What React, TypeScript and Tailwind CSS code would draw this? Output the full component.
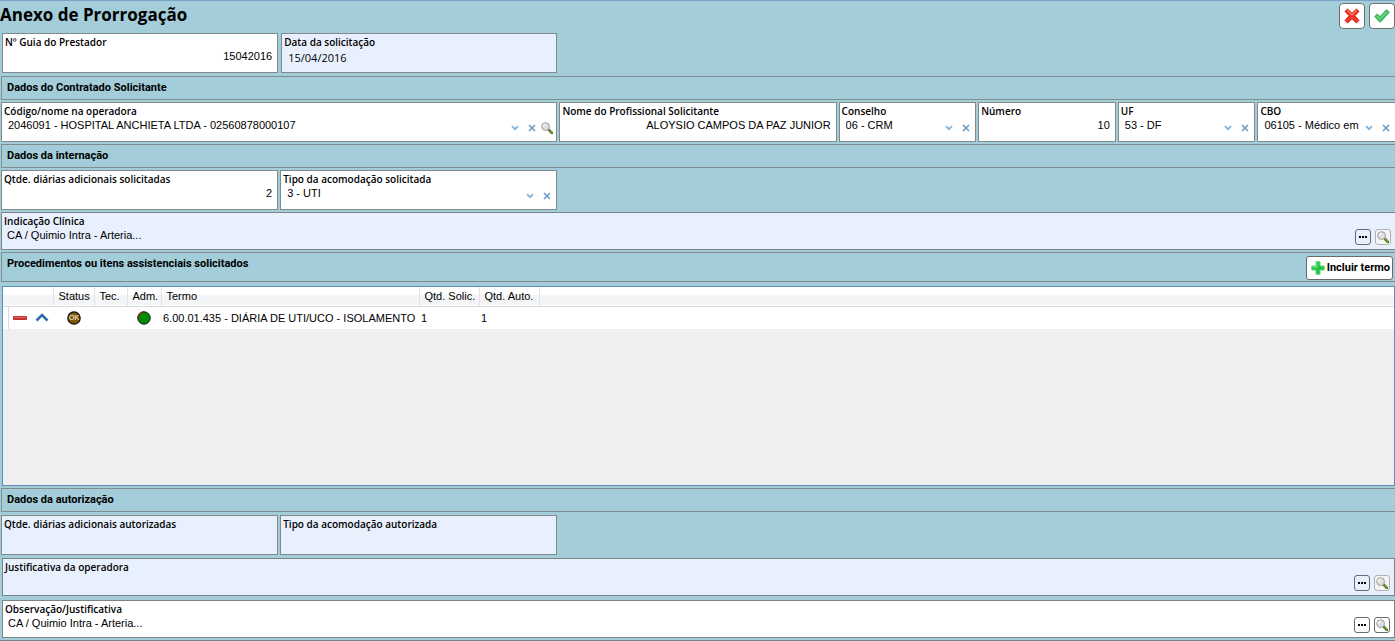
import { useState } from "react";
import type { ReactNode } from "react";
import clsx from "clsx";

const labelClass =
  "block whitespace-nowrap font-['Open_Sans','Noto_Sans',sans-serif] text-[10px] leading-3 font-semibold";
const inputClass = "h-4 w-full min-w-0 bg-transparent p-0 outline-none";

function MagnifierIcon({ size = 12 }: { size?: number }) {
  return (
    <svg width={size} height={size} viewBox="0 0 12 12" fill="none" aria-hidden="true">
      <path d="M8 8 L11 11" stroke="#4c7a22" strokeWidth="2.6" strokeLinecap="round" />
      <path d="M8.6 8.2 L11 10.6" stroke="#93b85a" strokeWidth="1" strokeLinecap="round" />
      <circle cx="4.6" cy="4.6" r="3.9" fill="#dedede" stroke="#9c9c9c" strokeWidth="1" />
      <path d="M2.4 4.6 A2.2 2.2 0 0 1 4.6 2.4" stroke="#ffffff" strokeWidth="1.2" />
    </svg>
  );
}

function ChevronIcon() {
  return (
    <svg width="8" height="6" viewBox="0 0 8 6" fill="none" aria-hidden="true">
      <path d="M1 1.2 L4 4.2 L7 1.2" stroke="#86b2d8" strokeWidth="1.8" />
    </svg>
  );
}

function ClearIcon() {
  return (
    <svg width="8" height="8" viewBox="0 0 8 8" fill="none" aria-hidden="true">
      <path d="M1 1 L7 7 M7 1 L1 7" stroke="#6f9cc6" strokeWidth="1.7" />
    </svg>
  );
}

function CancelIcon() {
  return (
    <svg width="16" height="16" viewBox="0 0 16 16" aria-hidden="true">
      <path
        d="M3.6 1 L8 5.2 L12.4 1 L15 3.4 L10.8 7.8 L15 12.4 L12.4 15 L8 10.8 L3.6 15 L1 12.4 L5.2 7.8 L1 3.4 Z"
        fill="#ee3526"
        stroke="#d81f17"
        strokeWidth="1"
        strokeLinejoin="round"
      />
      <path d="M3.6 2.6 L8 6.8 L12.4 2.6" fill="none" stroke="#ff7b62" strokeWidth="1.4" />
    </svg>
  );
}

function ConfirmIcon() {
  return (
    <svg width="16" height="16" viewBox="0 0 16 16" aria-hidden="true">
      <path
        d="M0.8 8.6 L3.2 6 L6.2 8.6 L12.4 1.8 L15.4 4 L6.8 13.8 L5.4 13.8 Z"
        fill="#49c466"
        stroke="#2fa64d"
        strokeWidth="0.9"
        strokeLinejoin="round"
      />
      <path d="M3 8 L6.1 10.8 L13 3.6" fill="none" stroke="#86e29a" strokeWidth="1" />
    </svg>
  );
}

function PlusIcon() {
  return (
    <svg width="14" height="14" viewBox="0 0 14 14" aria-hidden="true">
      <path
        d="M5 0.8 H9 V5 H13.2 V9 H9 V13.2 H5 V9 H0.8 V5 H5 Z"
        fill="#1fc443"
        stroke="#5fd47a"
        strokeWidth="1"
      />
      <path d="M6 2 V6 H2" fill="none" stroke="#7fe795" strokeWidth="1" />
    </svg>
  );
}

function Section({ title, tall, children }: { title: string; tall?: boolean; children?: ReactNode }) {
  return (
    <div
      className={clsx(
        "ml-px flex justify-between border border-r-0 border-[#7f8c90] pl-[5px]",
        tall ? "h-[30px]" : "h-6"
      )}
    >
      <h2 className="pt-[3px] font-['Roboto','Liberation_Sans',sans-serif] text-[11px] leading-4 font-bold">{title}</h2>
      {children}
    </div>
  );
}

type FieldProps = {
  id: string;
  label: string;
  readOnly?: boolean;
  className?: string;
  children?: ReactNode;
};

function Field({ id, label, readOnly, className, children }: FieldProps) {
  return (
    <div
      className={clsx(
        "h-10 min-w-0 border border-[#808a8c] pt-[2px] pl-[2px]",
        readOnly ? "bg-[#e8f0fd]" : "bg-white",
        className
      )}
    >
      <label htmlFor={id} className={labelClass}>
        {label}
      </label>
      {children}
    </div>
  );
}

function NumberField({ id, label, value, className }: { id: string; label: string; value: string; className?: string }) {
  return (
    <Field id={id} label={label} className={className}>
      <input id={id} type="text" defaultValue={value} className={clsx(inputClass, "pr-[5px] text-right")} />
    </Field>
  );
}

type SelectFieldProps = {
  id: string;
  label: string;
  option: string;
  className?: string;
  searchable?: boolean;
};

function SelectField({ id, label, option, className, searchable }: SelectFieldProps) {
  const [value, setValue] = useState(option);

  return (
    <Field id={id} label={label} className={className}>
      <div className="flex items-start pl-[4px]">
        <select
          id={id}
          value={value}
          onChange={(e) => setValue(e.target.value)}
          className={clsx(inputClass, "flex-1 appearance-none overflow-hidden")}
        >
          <option value=""></option>
          <option value={option}>{option}</option>
        </select>
        <div className={clsx("flex h-[22px] shrink-0 items-center pl-[6px]", searchable ? "pr-[3px]" : "pr-[5px]")}>
          <ChevronIcon />
          <button type="button" aria-label={`Limpar ${label}`} onClick={() => setValue("")} className="ml-[9px]">
            <ClearIcon />
          </button>
          {searchable && (
            <button type="button" aria-label={`Pesquisar ${label}`} className="ml-[5px]">
              <MagnifierIcon />
            </button>
          )}
        </div>
      </div>
    </Field>
  );
}

type TextFieldProps = {
  id: string;
  label: string;
  value?: string;
  readOnly?: boolean;
  className?: string;
};

function TextField({ id, label, value = "", readOnly, className }: TextFieldProps) {
  return (
    <div
      className={clsx(
        "flex h-[38px] items-end justify-between border border-[#7b8486] pt-[2px] pr-[4px] pb-1 pl-[2px]",
        readOnly ? "bg-[#e8f0fd]" : "bg-white",
        className
      )}
    >
      <div className="flex-1 self-start">
        <label htmlFor={id} className={labelClass}>
          {label}
        </label>
        <input id={id} type="text" defaultValue={value} readOnly={readOnly} className={clsx(inputClass, "pl-[3px]")} />
      </div>
      <div className="flex gap-1">
        <button
          type="button"
          aria-label={`Abrir ${label}`}
          className="flex size-4 items-center justify-center gap-px rounded-[3px] border border-[#666b70]"
        >
          <span className="size-[2px] bg-black" />
          <span className="size-[2px] bg-black" />
          <span className="size-[2px] bg-black" />
        </button>
        <button
          type="button"
          aria-label={`Pesquisar ${label}`}
          disabled={readOnly}
          className={clsx(
            "flex size-4 items-center justify-center rounded-[3px] border",
            readOnly ? "border-[#b0b0b0] bg-[#f4f4f4]" : "border-[#6b6b6b] bg-white"
          )}
        >
          <MagnifierIcon />
        </button>
      </div>
    </div>
  );
}

const columns = ["Status", "Tec.", "Adm.", "Termo", "Qtd. Solic.", "Qtd. Auto."];

function ProceduresTable() {
  return (
    <div className="mt-[2px] ml-[2px] min-h-[200px] flex-1 border border-[#5f8db8] bg-[#efefef]">
      <table className="w-full table-fixed border-collapse text-left">
        <colgroup>
          <col className="w-[5px]" />
          <col className="w-[45px]" />
          <col className="w-[41px]" />
          <col className="w-[33px]" />
          <col className="w-[34px]" />
          <col className="w-[258px]" />
          <col className="w-[60px]" />
          <col className="w-[60px]" />
          <col />
        </colgroup>
        <thead>
          <tr className="h-[19px] border-b border-[#d9dadc] bg-linear-to-b from-white from-40% to-[#f4f5f6] to-45%">
            <th className="p-0" />
            <th className="border-r border-[#e1e3e6] p-0" />
            {columns.map((column) => (
              <th key={column} className="border-r border-[#e1e3e6] p-0 pl-[5px] font-normal whitespace-nowrap">
                {column}
              </th>
            ))}
            <th className="p-0" />
          </tr>
        </thead>
        <tbody>
          <tr className="h-[23px] bg-white">
            <td className="border-r border-[#dcdcdc] p-0" />
            <td className="p-0">
              <div className="flex items-center gap-2 pl-1">
                <button type="button" aria-label="Remover termo">
                  <svg width="14" height="4" viewBox="0 0 14 4" aria-hidden="true">
                    <rect width="14" height="4" rx="1" fill="#c22f2f" />
                    <rect x="1" y="1" width="12" height="1" fill="#dd6c68" />
                  </svg>
                </button>
                <button type="button" aria-label="Recolher detalhes">
                  <svg width="14" height="9" viewBox="0 0 14 9" fill="none" aria-hidden="true">
                    <path d="M1.5 7.5 L7 2 L12.5 7.5" stroke="#2f6ba8" strokeWidth="2.6" />
                  </svg>
                </button>
              </div>
            </td>
            <td className="p-0">
              <svg width="14" height="14" viewBox="0 0 14 14" className="mx-auto" role="img" aria-label="OK">
                <circle cx="7" cy="7" r="6.2" fill="#825600" stroke="#111111" strokeWidth="1.2" />
                <text
                  x="7"
                  y="9.4"
                  textAnchor="middle"
                  fill="#ffffff"
                  className="font-['Liberation_Sans',sans-serif] text-[7px]"
                >
                  OK
                </text>
              </svg>
            </td>
            <td className="p-0" />
            <td className="p-0">
              <svg width="14" height="14" viewBox="0 0 14 14" className="mx-auto" role="img" aria-label="Autorizado">
                <circle cx="7" cy="7" r="6.2" fill="#028a02" stroke="#111111" strokeWidth="1" />
                <path d="M1 8 A6.2 6.2 0 0 1 7 0.8" fill="none" stroke="#b01010" strokeWidth="1" />
              </svg>
            </td>
            <td className="p-0 pl-[2px] whitespace-nowrap">6.00.01.435 - DIÁRIA DE UTI/UCO - ISOLAMENTO</td>
            <td className="p-0 pl-[2px]">1</td>
            <td className="p-0 pl-[2px]">1</td>
            <td className="p-0" />
          </tr>
        </tbody>
      </table>
    </div>
  );
}

export default function App() {
  return (
    <form
      onSubmit={(e) => e.preventDefault()}
      className="flex min-h-screen flex-col gap-[2px] overflow-hidden border-y border-t-[#7ba3c4] border-b-[#76888e] bg-[#a2cdd9] font-['Liberation_Sans',Arial,sans-serif] text-[11px] leading-4 text-black"
    >
      <header className="flex h-[30px] items-start justify-between">
        <h1 className="font-['Open_Sans','Noto_Sans',sans-serif] text-[17px] leading-7 font-bold">
          Anexo de Prorrogação
        </h1>
        <div className="flex gap-1 pt-[2px]">
          <button
            type="button"
            aria-label="Cancelar"
            className="flex size-[26px] items-center justify-center rounded border border-[#707070] bg-white"
          >
            <CancelIcon />
          </button>
          <button
            type="submit"
            aria-label="Confirmar"
            className="flex size-[26px] items-center justify-center rounded border border-[#707070] bg-white"
          >
            <ConfirmIcon />
          </button>
        </div>
      </header>

      <div className="mb-px grid grid-cols-5 gap-[3px] pl-[2px]">
        <NumberField id="guia" label="Nº Guia do Prestador" value="15042016" />
        <Field id="data" label="Data da solicitação" readOnly>
          <input
            id="data"
            type="text"
            readOnly
            defaultValue="15/04/2016"
            className={clsx(inputClass, "mt-[2px] pl-[4px] font-['Open_Sans','Noto_Sans',sans-serif]")}
          />
        </Field>
      </div>

      <Section title="Dados do Contratado Solicitante" />
      <div className="grid grid-cols-10 gap-[2px] pl-px">
        <SelectField
          id="codigo"
          label="Código/nome na operadora"
          option="2046091 - HOSPITAL ANCHIETA LTDA - 02560878000107"
          className="col-span-4"
          searchable
        />
        <NumberField
          id="profissional"
          label="Nome do Profissional Solicitante"
          value="ALOYSIO CAMPOS DA PAZ JUNIOR"
          className="col-span-2"
        />
        <SelectField id="conselho" label="Conselho" option="06 - CRM" />
        <NumberField id="numero" label="Número" value="10" />
        <SelectField id="uf" label="UF" option="53 - DF" />
        <SelectField id="cbo" label="CBO" option="06105 - Médico em" className="border-r-0" />
      </div>

      <Section title="Dados da internação" />
      <div className="grid grid-cols-5 gap-[2px] pl-px">
        <NumberField id="qtde-solicitada" label="Qtde. diárias adicionais solicitadas" value="2" />
        <SelectField id="acomodacao-solicitada" label="Tipo da acomodação solicitada" option="3 - UTI" />
      </div>
      <TextField
        id="indicacao"
        label="Indicação Clínica"
        value="CA / Quimio Intra - Arteria..."
        readOnly
        className="ml-px border-r-0"
      />

      <Section title="Procedimentos ou itens assistenciais solicitados" tall>
        <button
          type="button"
          className="mt-[3px] mr-[2px] flex h-6 items-center gap-[2px] rounded-[3px] border border-[#666b6e] bg-white pr-[2px] pl-1 font-['Roboto','Liberation_Sans',sans-serif] font-bold"
        >
          <PlusIcon />
          Incluir termo
        </button>
      </Section>
      <ProceduresTable />

      <Section title="Dados da autorização" />
      <div className="mt-px grid grid-cols-5 gap-[2px] pl-px">
        <Field id="qtde-autorizada" label="Qtde. diárias adicionais autorizadas" readOnly>
          <input id="qtde-autorizada" type="text" readOnly className={inputClass} />
        </Field>
        <Field id="acomodacao-autorizada" label="Tipo da acomodação autorizada" readOnly>
          <input id="acomodacao-autorizada" type="text" readOnly className={inputClass} />
        </Field>
      </div>
      <TextField id="justificativa" label="Justificativa da operadora" readOnly className="mt-px ml-[2px]" />
      <TextField
        id="observacao"
        label="Observação/Justificativa"
        value="CA / Quimio Intra - Arteria..."
        className="mt-[2px] mb-[2px] ml-[2px]"
      />
    </form>
  );
}
